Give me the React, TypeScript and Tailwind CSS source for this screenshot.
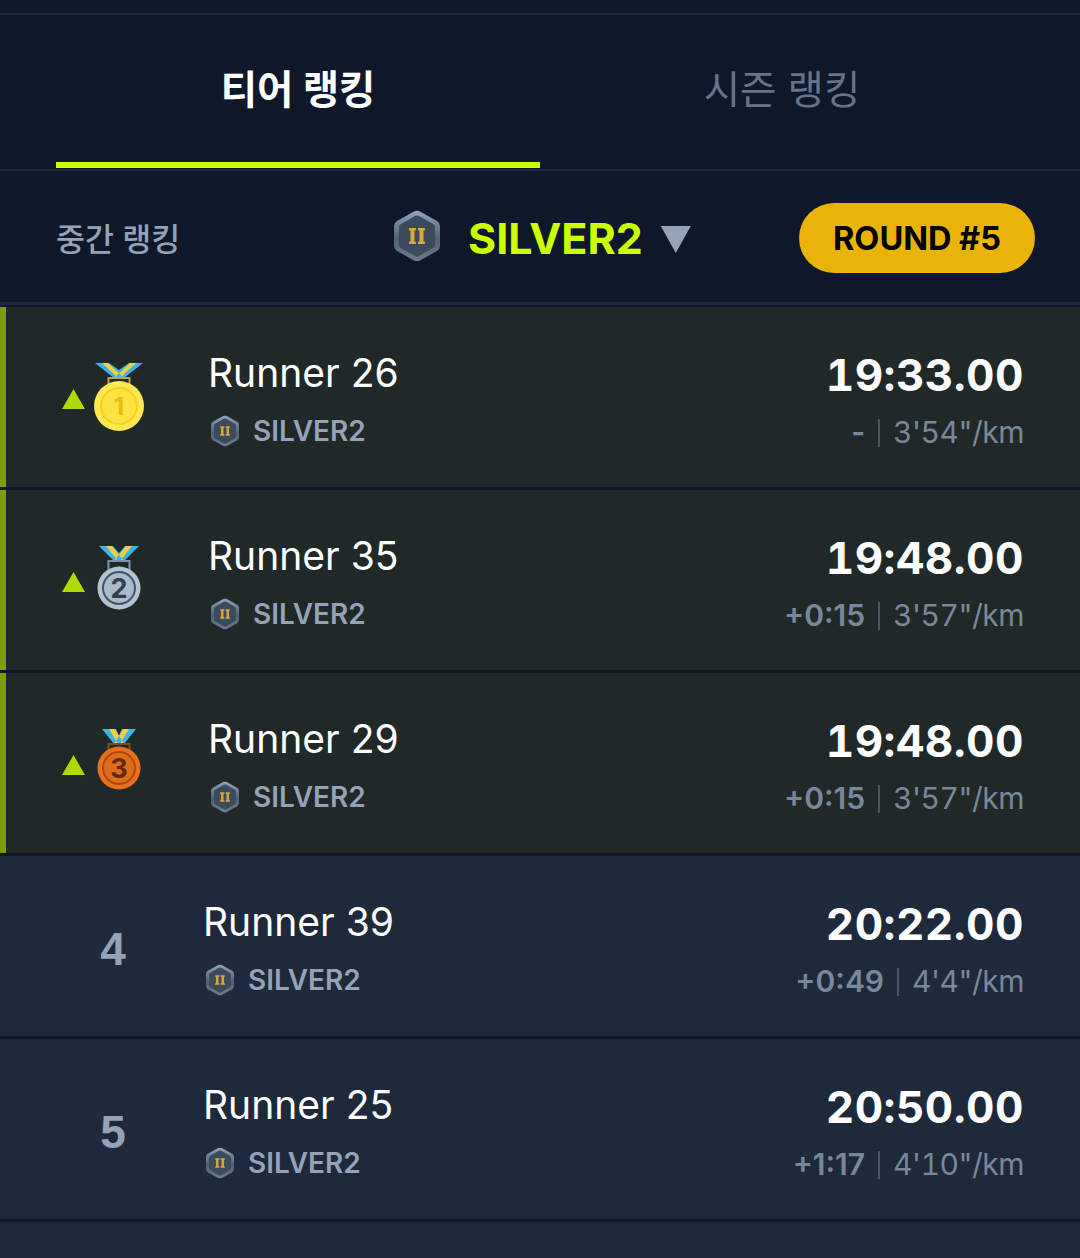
const runners = [
  { rank: 1, name: 'Runner 26', time: '19:33.00', diff: '-', pace: `3'54"/km` },
  { rank: 2, name: 'Runner 35', time: '19:48.00', diff: '+0:15', pace: `3'57"/km` },
  { rank: 3, name: 'Runner 29', time: '19:48.00', diff: '+0:15', pace: `3'57"/km` },
  { rank: 4, name: 'Runner 39', time: '20:22.00', diff: '+0:49', pace: `4'4"/km` },
  { rank: 5, name: 'Runner 25', time: '20:50.00', diff: '+1:17', pace: `4'10"/km` },
];

function TierBadge({ big }: { big?: boolean }) {
  return (
    <svg viewBox="0 0 46 52" className={big ? 'w-[46px] h-[52px] shrink-0 mb-[4px]' : 'w-[28px] h-[32px] shrink-0'}>
      <defs>
        <linearGradient id="tierRim" x1="0" y1="0" x2="0" y2="1">
          <stop offset="0" stopColor="#8fa6bf" />
          <stop offset="0.55" stopColor="#4f6073" />
          <stop offset="1" stopColor="#6b7d92" />
        </linearGradient>
      </defs>
      <path d="M20 1.5 Q23 0 26 1.5 L43 11 Q46 13 46 16 L46 36 Q46 39 43 41 L26 50.5 Q23 52 20 50.5 L3 41 Q0 39 0 36 L0 16 Q0 13 3 11 Z" fill="url(#tierRim)" />
      <path d="M21 6 Q23 5 25 6 L39 14 Q41 15 41 17 L41 35 Q41 37 39 38 L25 46 Q23 47 21 46 L7 38 Q5 37 5 35 L5 17 Q5 15 7 14 Z" fill="#3d4a5b" />
      <path d="M15 18 H22 V20.5 H20.5 V31.5 H22 V34 H15 V31.5 H16.5 V20.5 H15 Z M24 18 H31 V20.5 H29.5 V31.5 H31 V34 H24 V31.5 H25.5 V20.5 H24 Z" fill="#d6a93c" />
    </svg>
  );
}

const medalColors = {
  1: { w: 50, h: 70, cy: 43, r: 25, inner: 17, rim: '#ffe94f', face: '#fbcf1f', core: '#ffe441', ink: '#f2b90f', loop: '#b9a63a', size: 24, dy: 9, nudge: 'mt-[2px]' },
  2: { w: 44, h: 64, cy: 42, r: 21.5, inner: 15, rim: '#b4c3d3', face: '#3f5266', core: '#a9bacb', ink: '#2f4053', loop: '#7f93a6', size: 27, dy: 10, nudge: 'mb-[4px]' },
  3: { w: 44, h: 61, cy: 39, r: 21.5, inner: 15, rim: '#e8701a', face: '#a84a10', core: '#df6c16', ink: '#5f2a0c', loop: '#7c4a25', size: 27, dy: 10, nudge: 'mb-[8px]' },
} as const;

function Medal({ rank }: { rank: 1 | 2 | 3 }) {
  const m = medalColors[rank];
  const cx = m.w / 2;
  const rw = rank === 1 ? 24 : rank === 2 ? 20 : 17;
  return (
    <svg width={m.w} height={m.h} viewBox={`0 0 ${m.w} ${m.h}`} className={`shrink-0 ${m.nudge}`}>
      <path d={`M${cx - rw} 0 H${cx - rw + 14} L${cx} 7 L${cx + rw - 14} 0 H${cx + rw} L${cx + 5} 15 H${cx - 5} Z`} fill="#38b6e8" />
      <path d={`M${cx - rw + 7} 0 H${cx - rw + 13} L${cx + 5} 15 H${cx - 1} Z M${cx + rw - 7} 0 H${cx + rw - 13} L${cx - 5} 15 H${cx + 1} Z`} fill="#f3cf45" />
      <rect x={cx - 10.5} y={15} width={21} height={10} fill="none" stroke={m.loop} strokeWidth={2} />
      <circle cx={cx} cy={m.cy} r={m.r} fill={m.rim} />
      <circle cx={cx} cy={m.cy} r={m.inner + 2} fill={m.face} />
      <circle cx={cx} cy={m.cy} r={m.inner} fill={m.core} />
      <text
        x={cx}
        y={m.cy + m.dy}
        textAnchor="middle"
        fontSize={m.size}
        fontWeight={700}
        fontFamily="Inter, sans-serif"
        fill={m.ink}
      >
        {rank}
      </text>
    </svg>
  );
}

function Row({ r }: { r: (typeof runners)[number] }) {
  const top = r.rank <= 3;
  return (
    <div
      className={`h-[180px] flex items-center pr-[56px] ${
        top ? 'bg-[#202828] border-l-[6px] border-[#7e9c0c] pl-[56px]' : 'bg-[#1e293b] pl-[56px]'
      }`}
    >
      {top ? (
        <div className="w-[146px] flex items-center">
          <div className="w-[23px] h-[20px] mt-[4px] bg-[#aedb06] [clip-path:polygon(50%_0,100%_100%,0_100%)] mr-[9px]" />
          <div className="w-[50px] flex justify-center">
            <Medal rank={r.rank as 1 | 2 | 3} />
          </div>
        </div>
      ) : (
        <div className="w-[147px]">
          <div className="w-[114px] pt-[6px] text-center text-[46px] font-bold leading-none text-[#94a3b8] font-['Liberation_Sans',sans-serif]">
            {r.rank}
          </div>
        </div>
      )}
      <div className="flex-1 pt-[3px]">
        <div className="text-[39px] leading-[46px] text-white">{r.name}</div>
        <div className="mt-[19px] flex items-center gap-[14px] pl-[3px] h-[32px]">
          <TierBadge />
          <span className="text-[28px] font-semibold text-[#94a3b8]">SILVER2</span>
        </div>
      </div>
      <div className="flex flex-col items-end pt-[6px]">
        <div className="text-[44px] leading-[50px] font-bold text-white tabular-nums tracking-[0.5px]">{r.time}</div>
        <div className="mt-[15px] flex items-center h-[36px] text-[30px] text-[#78889c]">
          <span className="font-semibold">{r.diff}</span>
          <span className="w-[2px] h-[28px] bg-[#475569] mx-[13px]" />
          <span className="tabular-nums tracking-[-0.5px]">{r.pace}</span>
        </div>
      </div>
    </div>
  );
}

export default function App() {
  return (
    <div className="w-[1080px] h-[1258px] overflow-hidden bg-[#0f172a] font-['Inter','Noto_Sans_CJK_KR',sans-serif]">
      <div className="h-[13px]" />
      <div className="h-[158px] border-y-2 border-[#1e293b] flex px-[56px]">
        <div className="w-[484px] h-[154px] -mt-px border-b-[6px] border-[#ccff00] flex items-center justify-center pt-[6px] text-[39.5px] font-bold text-white">
          티어 랭킹
        </div>
        <div className="w-[484px] h-[154px] flex items-center justify-center pb-[2px] text-[39.5px] text-[#64748b]">
          시즌 랭킹
        </div>
      </div>
      <div className="h-[134px] border-b-[3px] border-[#1e293b] flex items-center justify-between pl-[56px] pr-[45px] pt-[2px]">
        <span className="w-[338px] pt-[4px] text-[31.5px] font-medium text-[#94a3b8]">중간 랭킹</span>
        <div className="flex items-center">
          <TierBadge big />
          <span className="ml-[28px] pt-[2px] text-[43px] font-bold text-[#ccff00]">SILVER2</span>
          <div className="ml-[18px] mt-[4px] w-[30px] h-[27px] bg-[#94a3b8] [clip-path:polygon(0_0,100%_0,50%_100%)]" />
        </div>
        <div className="ml-auto w-[236px] h-[70px] pt-[4px] rounded-full bg-[#eab308] flex items-center justify-center text-[32.5px] font-bold text-black">
          ROUND #5
        </div>
      </div>
      <div className="mt-[2px] flex flex-col gap-[3px]">
        {runners.map((r) => (
          <Row key={r.rank} r={r} />
        ))}
      </div>
      <div className="mt-[3px] h-[40px] bg-[#1e293b]" />
    </div>
  );
}
